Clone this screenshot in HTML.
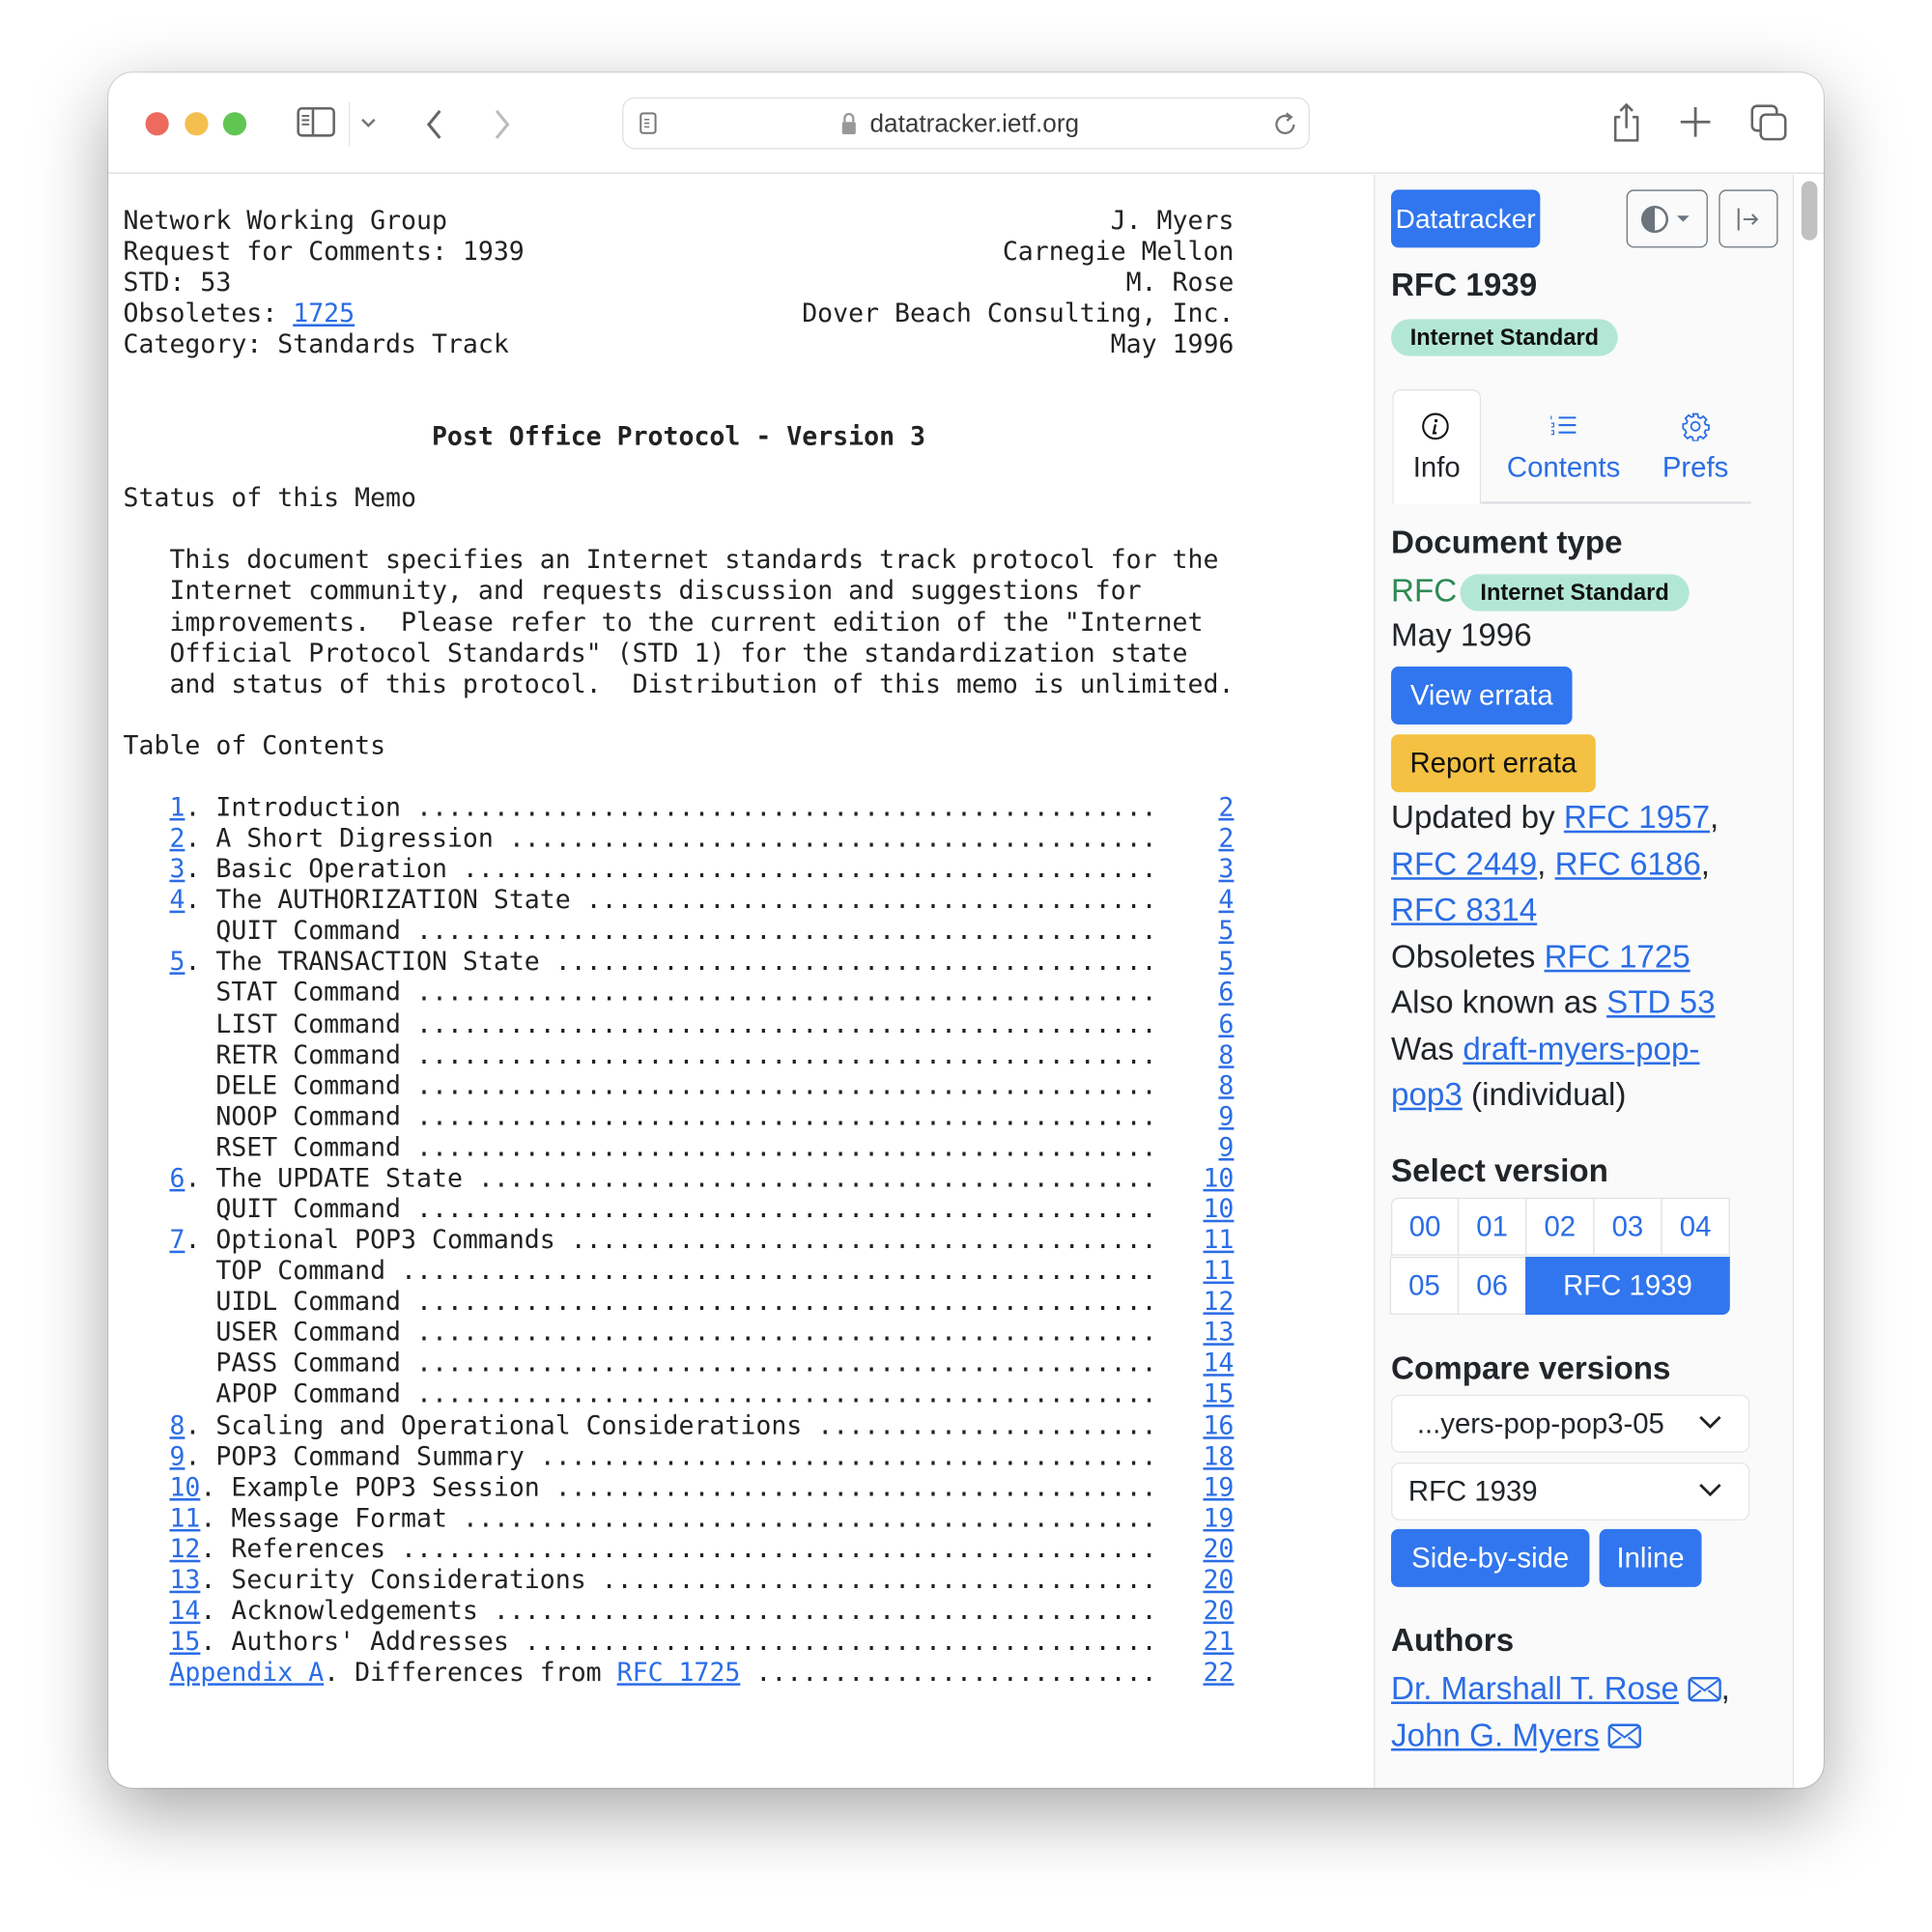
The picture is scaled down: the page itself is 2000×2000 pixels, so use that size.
<!DOCTYPE html>
<html><head><meta charset="utf-8"><style>
*{box-sizing:border-box;margin:0;padding:0}
html,body{width:2000px;height:2000px;overflow:hidden;background:#fff}
#s{position:absolute;left:0;top:0;width:1568px;height:1568px;transform:scale(1.2755);transform-origin:0 0}
.win{position:absolute;left:88px;top:59px;width:1392px;height:1392px;border-radius:20px;background:#fff;overflow:hidden;box-shadow:0 20px 60px rgba(0,0,0,.35),0 0 0 1px rgba(0,0,0,.12)}
.tb{position:absolute;left:0;top:0;width:1392px;height:82px;background:#fff;border-bottom:1px solid #ddd}
.dot{position:absolute;top:32px;width:19px;height:19px;border-radius:50%}
.abs{position:absolute}
.main{position:absolute;left:0;top:83px;width:1027px;height:1309px;background:#fff}
.mono{position:absolute;left:12px;top:24.5px;font-family:"DejaVu Sans Mono","Liberation Mono",monospace;font-size:20.8px;line-height:25.08px;color:#222}
.mono div{height:25.08px;white-space:pre}
.mono a{color:#2b6de6;text-decoration:underline}
.hd{width:72ch;display:flex;justify-content:space-between}
.tc{display:flex;width:72ch}
.tc .l{width:67ch;overflow:hidden;white-space:pre}
.tc .p{width:5ch;text-align:right}
.side{position:absolute;left:1027px;top:83px;width:341px;height:1309px;background:#fafafa;border-left:1px solid #e3e3e3;border-right:1px solid #e3e3e3;font-family:"Liberation Sans",Arial,sans-serif;color:#212529}
.side .a{position:absolute}
.btn{position:absolute;border-radius:6px;color:#fff;background:#3176ee;font-size:23px;display:flex;align-items:center;justify-content:center}
.h{position:absolute;font-weight:bold;font-size:26px;left:13px}
.badge{position:absolute;background:#b3e7d5;border-radius:16px;font-weight:bold;font-size:18.5px;display:flex;align-items:center;justify-content:center;color:#111}
.ln{position:absolute;left:13px;font-size:26px;line-height:37.5px;white-space:nowrap}
.ln a,.side a{color:#2b6de6;text-decoration:underline}
.vc{position:absolute;height:47px;border:1px solid #dee2e6;background:#fff;color:#2b6de6;font-size:23px;display:flex;align-items:center;justify-content:center}
.sel{position:absolute;left:13px;width:291px;height:47px;border:1.5px solid #e2e5e9;border-radius:7px;background:#fff;font-size:23px;display:flex;align-items:center}
.env{display:inline-block;vertical-align:-2px}
</style></head><body><div id="s">
<div class="win">
 <div class="tb">
  <div class="dot" style="left:30px;background:#ec6a5e"></div>
  <div class="dot" style="left:62px;background:#f4bf4f"></div>
  <div class="dot" style="left:93px;background:#61c554"></div>
  <svg class="abs" style="left:152px;top:26px" width="34" height="30" viewBox="0 0 34 30"><rect x="2" y="3" width="29" height="22" rx="3" fill="none" stroke="#666" stroke-width="2"/><line x1="14" y1="3" x2="14" y2="25" stroke="#666" stroke-width="2"/><path d="M5 9h6M5 12.5h6M5 16h6" stroke="#666" stroke-width="1.5"/></svg>
  <div class="abs" style="left:195px;top:24px;width:1px;height:36px;background:#e4e4e4"></div>
  <svg class="abs" style="left:203px;top:34px" width="16" height="12"><path d="M3 4l5 5 5-5" fill="none" stroke="#777" stroke-width="2"/></svg>
  <svg class="abs" style="left:255px;top:28px" width="20" height="28"><path d="M14 3L5 14l9 11" fill="none" stroke="#666" stroke-width="2.4"/></svg>
  <svg class="abs" style="left:309px;top:28px" width="20" height="28"><path d="M6 3l9 11-9 11" fill="none" stroke="#bbb" stroke-width="2.4"/></svg>
  <div class="abs" style="left:417px;top:20px;width:558px;height:42px;border:1.5px solid #e0e0e0;border-radius:10px;background:#fff"></div>
  <svg class="abs" style="left:430px;top:31px" width="16" height="20"><rect x="2" y="2" width="12" height="16" rx="2" fill="none" stroke="#777" stroke-width="1.6"/><path d="M5 7h4M5 10h4M5 13h4" stroke="#777" stroke-width="1.2"/></svg>
  <svg class="abs" style="left:594px;top:31px" width="14" height="20"><path d="M3.5 9V6a3.5 3.5 0 017 0v3" fill="none" stroke="#999" stroke-width="1.8"/><rect x="1.5" y="9" width="11" height="10" rx="1.5" fill="#999"/></svg>
  <div class="abs" style="left:618px;top:30px;font-family:'Liberation Sans',sans-serif;font-size:20.5px;color:#3a3a3a">datatracker.ietf.org</div>
  <svg class="abs" style="left:944px;top:30px" width="24" height="24"><path d="M18 12a7 7 0 1 1-3-5.7" fill="none" stroke="#777" stroke-width="1.8"/><path d="M12 3l4 3-3.5 3" fill="none" stroke="#777" stroke-width="1.8"/></svg>
  <svg class="abs" style="left:1217px;top:22px" width="30" height="36"><path d="M10 14H6v19h18V14h-4" fill="none" stroke="#666" stroke-width="2" stroke-linejoin="round"/><path d="M15 4v19M10 9l5-5 5 5" fill="none" stroke="#666" stroke-width="2"/></svg>
  <svg class="abs" style="left:1275px;top:27px" width="26" height="26"><path d="M13 1v24M1 13h24" stroke="#666" stroke-width="2.2"/></svg>
  <svg class="abs" style="left:1332px;top:25px" width="32" height="32"><rect x="2" y="2" width="20" height="20" rx="4" fill="none" stroke="#666" stroke-width="2"/><rect x="9" y="9" width="20" height="20" rx="4" fill="#fff" stroke="#666" stroke-width="2"/></svg>
 </div>
 <div class="main">
  <div class="mono">
<div class="hd"><span>Network Working Group</span><span>J. Myers</span></div>
<div class="hd"><span>Request for Comments: 1939</span><span>Carnegie Mellon</span></div>
<div class="hd"><span>STD: 53</span><span>M. Rose</span></div>
<div class="hd"><span>Obsoletes: <a>1725</a></span><span>Dover Beach Consulting, Inc.</span></div>
<div class="hd"><span>Category: Standards Track</span><span>May 1996</span></div>
<div></div><div></div>
<div style="font-weight:bold">                    Post Office Protocol - Version 3</div>
<div></div>
<div>Status of this Memo</div>
<div></div>
<div>   This document specifies an Internet standards track protocol for the</div>
<div>   Internet community, and requests discussion and suggestions for</div>
<div>   improvements.  Please refer to the current edition of the "Internet</div>
<div>   Official Protocol Standards" (STD 1) for the standardization state</div>
<div>   and status of this protocol.  Distribution of this memo is unlimited.</div>
<div></div>
<div>Table of Contents</div>
<div></div>
<div class="tc"><span class="l">   <a>1</a>. Introduction ..........................................................................</span><span class="p"><a>2</a></span></div>
<div class="tc"><span class="l">   <a>2</a>. A Short Digression ..........................................................................</span><span class="p"><a>2</a></span></div>
<div class="tc"><span class="l">   <a>3</a>. Basic Operation ..........................................................................</span><span class="p"><a>3</a></span></div>
<div class="tc"><span class="l">   <a>4</a>. The AUTHORIZATION State ..........................................................................</span><span class="p"><a>4</a></span></div>
<div class="tc"><span class="l">      QUIT Command ..........................................................................</span><span class="p"><a>5</a></span></div>
<div class="tc"><span class="l">   <a>5</a>. The TRANSACTION State ..........................................................................</span><span class="p"><a>5</a></span></div>
<div class="tc"><span class="l">      STAT Command ..........................................................................</span><span class="p"><a>6</a></span></div>
<div class="tc"><span class="l">      LIST Command ..........................................................................</span><span class="p"><a>6</a></span></div>
<div class="tc"><span class="l">      RETR Command ..........................................................................</span><span class="p"><a>8</a></span></div>
<div class="tc"><span class="l">      DELE Command ..........................................................................</span><span class="p"><a>8</a></span></div>
<div class="tc"><span class="l">      NOOP Command ..........................................................................</span><span class="p"><a>9</a></span></div>
<div class="tc"><span class="l">      RSET Command ..........................................................................</span><span class="p"><a>9</a></span></div>
<div class="tc"><span class="l">   <a>6</a>. The UPDATE State ..........................................................................</span><span class="p"><a>10</a></span></div>
<div class="tc"><span class="l">      QUIT Command ..........................................................................</span><span class="p"><a>10</a></span></div>
<div class="tc"><span class="l">   <a>7</a>. Optional POP3 Commands ..........................................................................</span><span class="p"><a>11</a></span></div>
<div class="tc"><span class="l">      TOP Command ..........................................................................</span><span class="p"><a>11</a></span></div>
<div class="tc"><span class="l">      UIDL Command ..........................................................................</span><span class="p"><a>12</a></span></div>
<div class="tc"><span class="l">      USER Command ..........................................................................</span><span class="p"><a>13</a></span></div>
<div class="tc"><span class="l">      PASS Command ..........................................................................</span><span class="p"><a>14</a></span></div>
<div class="tc"><span class="l">      APOP Command ..........................................................................</span><span class="p"><a>15</a></span></div>
<div class="tc"><span class="l">   <a>8</a>. Scaling and Operational Considerations ..........................................................................</span><span class="p"><a>16</a></span></div>
<div class="tc"><span class="l">   <a>9</a>. POP3 Command Summary ..........................................................................</span><span class="p"><a>18</a></span></div>
<div class="tc"><span class="l">   <a>10</a>. Example POP3 Session ..........................................................................</span><span class="p"><a>19</a></span></div>
<div class="tc"><span class="l">   <a>11</a>. Message Format ..........................................................................</span><span class="p"><a>19</a></span></div>
<div class="tc"><span class="l">   <a>12</a>. References ..........................................................................</span><span class="p"><a>20</a></span></div>
<div class="tc"><span class="l">   <a>13</a>. Security Considerations ..........................................................................</span><span class="p"><a>20</a></span></div>
<div class="tc"><span class="l">   <a>14</a>. Acknowledgements ..........................................................................</span><span class="p"><a>20</a></span></div>
<div class="tc"><span class="l">   <a>15</a>. Authors' Addresses ..........................................................................</span><span class="p"><a>21</a></span></div>
<div class="tc"><span class="l">   <a>Appendix A</a>. Differences from <a>RFC 1725</a> ..........................................................................</span><span class="p"><a>22</a></span></div>
  </div>
 </div>
 <div class="side">
  <div class="btn" style="left:13px;top:12px;width:121px;height:47px;font-size:22px">Datatracker</div>
  <div class="abs" style="left:204px;top:12px;width:66px;height:47px;border:1.5px solid #6c757d;border-radius:6px"></div>
  <svg class="abs" style="left:215px;top:24px" width="46" height="24"><circle cx="12" cy="12" r="10" fill="#fff" stroke="#6c757d" stroke-width="2"/><path d="M12 2a10 10 0 0 0 0 20z" fill="#6c757d"/><path d="M30 9h10l-5 5z" fill="#6c757d"/></svg>
  <div class="abs" style="left:279px;top:12px;width:48px;height:47px;border:1.5px solid #6c757d;border-radius:6px"></div>
  <svg class="abs" style="left:291px;top:24px" width="24" height="24"><path d="M4 3v18M8 12h11M15 8l4 4-4 4" fill="none" stroke="#6c757d" stroke-width="1.6"/></svg>
  <div class="h" style="top:74px">RFC 1939</div>
  <div class="badge" style="left:13px;top:117px;width:184px;height:30px">Internet Standard</div>
  <div class="abs" style="left:14px;top:174px;width:72px;height:93px;border:1.5px solid #dee2e6;border-bottom:none;border-radius:7px 7px 0 0;background:#fff"></div>
  <div class="abs" style="left:86px;top:265px;width:219px;height:1.5px;background:#dee2e6"></div>
  <svg class="abs" style="left:37px;top:192px" width="24" height="24"><circle cx="12" cy="12" r="10" fill="none" stroke="#111" stroke-width="1.6"/><circle cx="12.5" cy="7.5" r="1.3" fill="#111"/><path d="M12 10.5l-1.5 7h2.5" fill="none" stroke="#111" stroke-width="1.8"/></svg>
  <div class="a" style="left:14px;width:72px;top:224px;text-align:center;font-size:23px">Info</div>
  <svg class="abs" style="left:141px;top:193px" width="24" height="20"><path d="M8 4h14M8 10h14M8 16h14" stroke="#2b6de6" stroke-width="1.6"/><path d="M2 2.5v3M2 8.5h2v3h-2M2 14.5h2v3h-2" stroke="#2b6de6" stroke-width="0.9" fill="none"/></svg>
  <div class="a" style="left:98px;width:110px;top:224px;text-align:center;font-size:23px;color:#2b6de6">Contents</div>
  <svg class="abs" style="left:248px;top:192px" width="24" height="24" viewBox="0 0 24 24"><path d="M10.2 2h3.6l.5 2.7 1.8.8 2.3-1.6 2.6 2.6-1.6 2.3.8 1.8 2.7.5v3.6l-2.7.5-.8 1.8 1.6 2.3-2.6 2.6-2.3-1.6-1.8.8-.5 2.7h-3.6l-.5-2.7-1.8-.8-2.3 1.6-2.6-2.6 1.6-2.3-.8-1.8L2 13.8v-3.6l2.7-.5.8-1.8-1.6-2.3 2.6-2.6 2.3 1.6 1.8-.8z" fill="none" stroke="#2b6de6" stroke-width="1.4"/><circle cx="12" cy="12" r="3.5" fill="none" stroke="#2b6de6" stroke-width="1.4"/></svg>
  <div class="a" style="left:220px;width:80px;top:224px;text-align:center;font-size:23px;color:#2b6de6">Prefs</div>
  <div class="h" style="top:283px">Document type</div>
  <div class="a" style="left:13px;top:322px;font-size:26px;color:#2f8a55">RFC</div>
  <div class="badge" style="left:69px;top:324px;width:186px;height:30px">Internet Standard</div>
  <div class="ln" style="top:355px">May 1996</div>
  <div class="btn" style="left:13px;top:399px;width:147px;height:47px">View errata</div>
  <div class="btn" style="left:13px;top:454px;width:166px;height:47px;background:#f4c142;color:#111">Report errata</div>
  <div class="ln" style="top:503px">Updated by <a>RFC 1957</a>,</div>
  <div class="ln" style="top:540.5px"><a>RFC 2449</a>, <a>RFC 6186</a>,</div>
  <div class="ln" style="top:578px"><a>RFC 8314</a></div>
  <div class="ln" style="top:615.5px">Obsoletes <a>RFC 1725</a></div>
  <div class="ln" style="top:653px">Also known as <a>STD 53</a></div>
  <div class="ln" style="top:690.5px">Was <a>draft-myers-pop-</a></div>
  <div class="ln" style="top:728px"><a>pop3</a> (individual)</div>
  <div class="h" style="top:793px">Select version</div>
  <div class="vc" style="left:13px;top:830px;width:55px;border-radius:6px 0 0 0">00</div>
  <div class="vc" style="left:67px;top:830px;width:56px">01</div>
  <div class="vc" style="left:122px;top:830px;width:56px">02</div>
  <div class="vc" style="left:177px;top:830px;width:56px">03</div>
  <div class="vc" style="left:232px;top:830px;width:56px">04</div>
  <div class="vc" style="left:12px;top:878px;width:56px">05</div>
  <div class="vc" style="left:67px;top:878px;width:56px">06</div>
  <div class="vc" style="left:122px;top:878px;width:166px;background:#3176ee;color:#fff;border-color:#3176ee;border-radius:0 0 6px 0">RFC 1939</div>
  <div class="h" style="top:953px">Compare versions</div>
  <div class="sel" style="top:990px;padding-left:20px">...yers-pop-pop3-05</div>
  <svg class="abs" style="left:262px;top:1005px" width="20" height="14"><path d="M2 3l8 8 8-8" fill="none" stroke="#222" stroke-width="2.2"/></svg>
  <div class="sel" style="top:1045px;padding-left:13px">RFC 1939</div>
  <svg class="abs" style="left:262px;top:1060px" width="20" height="14"><path d="M2 3l8 8 8-8" fill="none" stroke="#222" stroke-width="2.2"/></svg>
  <div class="btn" style="left:13px;top:1099px;width:161px;height:47px">Side-by-side</div>
  <div class="btn" style="left:182px;top:1099px;width:83px;height:47px">Inline</div>
  <div class="h" style="top:1174px">Authors</div>
  <div class="ln" style="top:1210px"><a>Dr. Marshall T. Rose</a> <svg class="env" width="27" height="20"><rect x="1" y="1" width="25" height="18" rx="3" fill="none" stroke="#2b6de6" stroke-width="2"/><path d="M1.5 2l12 9 12-9M1.5 18l9-7M25.5 18l-9-7" fill="none" stroke="#2b6de6" stroke-width="1.6"/></svg>,</div>
  <div class="ln" style="top:1247.5px"><a>John G. Myers</a> <svg class="env" width="27" height="20"><rect x="1" y="1" width="25" height="18" rx="3" fill="none" stroke="#2b6de6" stroke-width="2"/><path d="M1.5 2l12 9 12-9M1.5 18l9-7M25.5 18l-9-7" fill="none" stroke="#2b6de6" stroke-width="1.6"/></svg></div>
 </div>
 <div class="abs" style="left:1368px;top:83px;width:24px;height:1309px;background:#fff"></div>
 <div class="abs" style="left:1374px;top:88px;width:13px;height:48px;border-radius:7px;background:#c1c1c1"></div>
</div>
</div></body></html>
